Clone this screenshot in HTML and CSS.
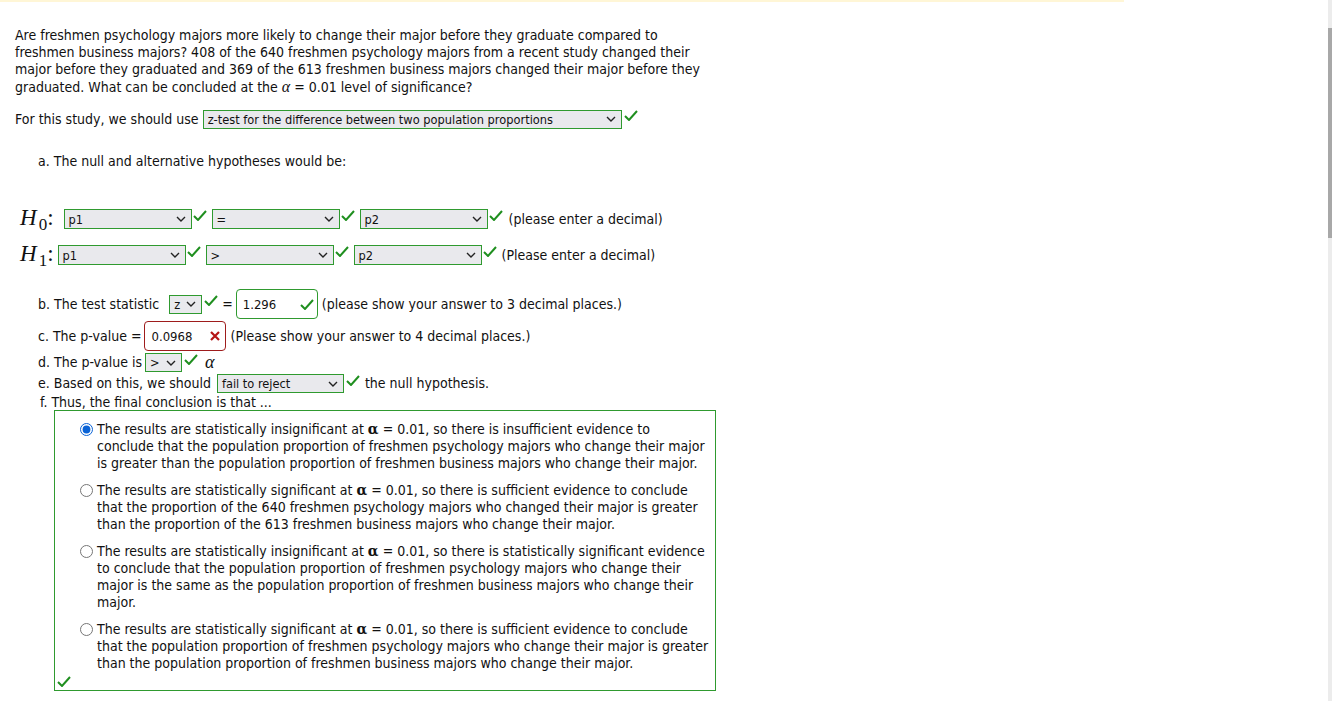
FILE: index.html
```html
<!DOCTYPE html>
<html>
<head>
<meta charset="utf-8">
<link rel="stylesheet" href="styles.css">
</head>
<body>
<div class="topbar"></div>
<div class="page">
  <p class="question">Are freshmen psychology majors more likely to change their major before they graduate compared to<br>freshmen business majors? 408 of the 640 freshmen psychology majors from a recent study changed their<br>major before they graduated and 369 of the 613 freshmen business majors changed their major before they<br>graduated. What can be concluded at the <span class="malpha">α</span> = 0.01 level of significance?</p>

  <div class="row study">
    <span>For this study, we should use</span>
    <span class="sel w-study"><span class="val">z-test for the difference between two population proportions</span><svg class="chev" viewBox="0 0 10 6" width="10" height="6"><path d="M1 1 L5 5 L9 1" fill="none" stroke="#222" stroke-width="1.4"/></svg></span>
    <svg class="check" viewBox="0 0 14 11" width="14" height="11"><path d="M1 6 L5 10 L13 1" fill="none" stroke="#1f8f1f" stroke-width="2"/></svg>
  </div>

  <div class="row parta">a. The null and alternative hypotheses would be:</div>

  <div class="row hyp h0">
    <span class="mathH"><i>H</i><span class="sub">0</span>:</span>
    <span class="sel w-hyp"><span class="val">p1</span><svg class="chev" viewBox="0 0 10 6" width="10" height="6"><path d="M1 1 L5 5 L9 1" fill="none" stroke="#222" stroke-width="1.4"/></svg></span>
    <svg class="check" viewBox="0 0 14 11" width="14" height="11"><path d="M1 6 L5 10 L13 1" fill="none" stroke="#1f8f1f" stroke-width="2"/></svg>
    <span class="sel w-hyp"><span class="val">=</span><svg class="chev" viewBox="0 0 10 6" width="10" height="6"><path d="M1 1 L5 5 L9 1" fill="none" stroke="#222" stroke-width="1.4"/></svg></span>
    <svg class="check" viewBox="0 0 14 11" width="14" height="11"><path d="M1 6 L5 10 L13 1" fill="none" stroke="#1f8f1f" stroke-width="2"/></svg>
    <span class="sel w-hyp"><span class="val">p2</span><svg class="chev" viewBox="0 0 10 6" width="10" height="6"><path d="M1 1 L5 5 L9 1" fill="none" stroke="#222" stroke-width="1.4"/></svg></span>
    <svg class="check" viewBox="0 0 14 11" width="14" height="11"><path d="M1 6 L5 10 L13 1" fill="none" stroke="#1f8f1f" stroke-width="2"/></svg>
    <span class="note">(please enter a decimal)</span>
  </div>

  <div class="row hyp h1">
    <span class="mathH"><i>H</i><span class="sub">1</span>:</span>
    <span class="sel w-hyp"><span class="val">p1</span><svg class="chev" viewBox="0 0 10 6" width="10" height="6"><path d="M1 1 L5 5 L9 1" fill="none" stroke="#222" stroke-width="1.4"/></svg></span>
    <svg class="check" viewBox="0 0 14 11" width="14" height="11"><path d="M1 6 L5 10 L13 1" fill="none" stroke="#1f8f1f" stroke-width="2"/></svg>
    <span class="sel w-hyp"><span class="val">&gt;</span><svg class="chev" viewBox="0 0 10 6" width="10" height="6"><path d="M1 1 L5 5 L9 1" fill="none" stroke="#222" stroke-width="1.4"/></svg></span>
    <svg class="check" viewBox="0 0 14 11" width="14" height="11"><path d="M1 6 L5 10 L13 1" fill="none" stroke="#1f8f1f" stroke-width="2"/></svg>
    <span class="sel w-hyp"><span class="val">p2</span><svg class="chev" viewBox="0 0 10 6" width="10" height="6"><path d="M1 1 L5 5 L9 1" fill="none" stroke="#222" stroke-width="1.4"/></svg></span>
    <svg class="check" viewBox="0 0 14 11" width="14" height="11"><path d="M1 6 L5 10 L13 1" fill="none" stroke="#1f8f1f" stroke-width="2"/></svg>
    <span class="note">(Please enter a decimal)</span>
  </div>

  <div class="row item partb">
    <span>b. The test statistic</span>
    <span class="sel w-z"><span class="val">z</span><svg class="chev" viewBox="0 0 10 6" width="10" height="6"><path d="M1 1 L5 5 L9 1" fill="none" stroke="#222" stroke-width="1.4"/></svg></span>
    <svg class="check" viewBox="0 0 14 11" width="14" height="11"><path d="M1 6 L5 10 L13 1" fill="none" stroke="#1f8f1f" stroke-width="2"/></svg>
    <span class="eq">=</span>
    <span class="field ok"><span class="val">1.296</span><svg class="icon" viewBox="0 0 14 11" width="14" height="11"><path d="M1 6 L5 10 L13 1" fill="none" stroke="#1f8f1f" stroke-width="2"/></svg></span>
    <span class="after">(please show your answer to 3 decimal places.)</span>
  </div>

  <div class="row item partc">
    <span>c. The p-value =</span>
    <span class="field bad"><span class="val">0.0968</span><svg class="icon" viewBox="0 0 10 10" width="10" height="10"><path d="M1 1 L9 9 M9 1 L1 9" fill="none" stroke="#b51515" stroke-width="2.2"/></svg></span>
    <span class="after">(Please show your answer to 4 decimal places.)</span>
  </div>

  <div class="row item partd">
    <span>d. The p-value is</span>
    <span class="sel w-cmp"><span class="val">&gt;</span><svg class="chev" viewBox="0 0 10 6" width="10" height="6"><path d="M1 1 L5 5 L9 1" fill="none" stroke="#222" stroke-width="1.4"/></svg></span>
    <svg class="check" viewBox="0 0 14 11" width="14" height="11"><path d="M1 6 L5 10 L13 1" fill="none" stroke="#1f8f1f" stroke-width="2"/></svg>
    <span class="malpha big">α</span>
  </div>

  <div class="row item parte">
    <span>e. Based on this, we should</span>
    <span class="sel w-rej"><span class="val">fail to reject</span><svg class="chev" viewBox="0 0 10 6" width="10" height="6"><path d="M1 1 L5 5 L9 1" fill="none" stroke="#222" stroke-width="1.4"/></svg></span>
    <svg class="check" viewBox="0 0 14 11" width="14" height="11"><path d="M1 6 L5 10 L13 1" fill="none" stroke="#1f8f1f" stroke-width="2"/></svg>
    <span class="after2">the null hypothesis.</span>
  </div>

  <div class="row partf">f. Thus, the final conclusion is that ...</div>

  <div class="choices">
    <label class="choice">
      <input type="radio" name="concl" checked>
      <span>The results are statistically insignificant at <b class="balpha">α</b> = 0.01, so there is insufficient evidence to<br>conclude that the population proportion of freshmen psychology majors who change their major<br>is greater than the population proportion of freshmen business majors who change their major.</span>
    </label>
    <label class="choice">
      <input type="radio" name="concl">
      <span>The results are statistically significant at <b class="balpha">α</b> = 0.01, so there is sufficient evidence to conclude<br>that the proportion of the 640 freshmen psychology majors who changed their major is greater<br>than the proportion of the 613 freshmen business majors who change their major.</span>
    </label>
    <label class="choice">
      <input type="radio" name="concl">
      <span>The results are statistically insignificant at <b class="balpha">α</b> = 0.01, so there is statistically significant evidence<br>to conclude that the population proportion of freshmen psychology majors who change their<br>major is the same as the population proportion of freshmen business majors who change their<br>major.</span>
    </label>
    <label class="choice">
      <input type="radio" name="concl">
      <span>The results are statistically significant at <b class="balpha">α</b> = 0.01, so there is sufficient evidence to conclude<br>that the population proportion of freshmen psychology majors who change their major is greater<br>than the population proportion of freshmen business majors who change their major.</span>
    </label>
    <svg class="boxcheck" viewBox="0 0 14 11" width="14" height="11"><path d="M1 6 L5 10 L13 1" fill="none" stroke="#1f8f1f" stroke-width="2"/></svg>
  </div>
</div>
<div class="scrollbar"><div class="thumb"></div></div>
</body>
</html>
```
FILE: styles.css
```css
html, body {
  margin: 0;
  padding: 0;
  background: #fff;
}
body {
  font-family: "DejaVu Sans Condensed", "DejaVu Sans", sans-serif;
  font-size: 14px;
  line-height: 17px;
  color: #111;
}
.topbar {
  height: 2px;
  width: 1124px;
  background: #fff6d6;
}
.page {
  padding-left: 15px;
}
.question {
  margin: 25px 0 0 0;
  white-space: nowrap;
}
.malpha {
  font-family: "Liberation Serif", "DejaVu Serif", serif;
  font-style: italic;
  font-size: 16px;
}
.malpha.big {
  font-size: 18px;
  margin-left: 7px;
}
.row {
  display: flex;
  align-items: center;
  white-space: nowrap;
}
.study {
  margin-top: 13px;
  height: 20px;
}
.study .sel {
  margin-left: 4px;
}
.parta {
  margin-top: 24px;
  padding-left: 23px;
}
.sel {
  display: inline-flex;
  align-items: center;
  justify-content: space-between;
  box-sizing: border-box;
  height: 19px;
  background: #e9e9ed;
  border: 1px solid #2f9a2f;
  padding: 0 5px 0 4px;
  font-family: "DejaVu Sans Condensed", "DejaVu Sans", sans-serif;
  font-size: 12.7px;
  color: #111;
}
.sel .chev {
  flex: none;
  margin-left: 6px;
}
.check {
  flex: none;
  margin: -7px 0 0 2px;
}
.w-study { width: 419px; }
.w-hyp { width: 128px; height: 20px; }
.w-z { width: 33px; }
.w-cmp { width: 37px; }
.w-rej { width: 127px; }

.hyp {
  height: 24px;
  padding-left: 5px;
}
.h0 { margin-top: 37px; }
.h1 { margin-top: 12px; }
.mathH {
  font-family: "Liberation Serif", "DejaVu Serif", serif;
  font-size: 23px;
  line-height: 24px;
  margin-right: 10px;
}
.mathH i {
  font-style: italic;
}
.mathH .sub {
  position: relative;
  top: 5px;
  font-size: 17px;
  margin-left: 2px;
}
.h1 .mathH { margin-right: 4px; }
.hyp .check { margin: -7px 5px 0 1px; }
.hyp .note { margin-left: 0; }
.h0 .note { margin-left: 1px; }

.item {
  padding-left: 23px;
}
.partb { margin-top: 22px; height: 30px; }
.partb .sel { margin-left: 10px; }
.eq { margin: 0 3px 0 4px; }
.field {
  display: inline-flex;
  align-items: center;
  justify-content: space-between;
  box-sizing: border-box;
  width: 82px;
  height: 30px;
  border-radius: 4px;
  padding: 0 3px 0 6px;
  background: #fff;
  font-size: 13px;
}
.field.ok { border: 1px solid #2f9a2f; }
.field.bad { border: 1px solid #9e1c1c; }
.field.bad .icon { margin-right: 2px; }
.after { margin-left: 4px; }
.partc { margin-top: 2px; height: 30px; }
.partc .field { margin-left: 3px; }
.partd { margin-top: 2px; height: 19px; }
.partd .sel { margin-left: 3px; }
.parte { margin-top: 2px; height: 19px; }
.parte .sel { margin-left: 6px; }
.after2 { margin-left: 5px; }
.partf {
  margin-top: 2px;
  height: 15px;
  padding-left: 25px;
}

.choices {
  position: relative;
  box-sizing: border-box;
  width: 662px;
  height: 281px;
  margin-left: 39px;
  border: 1px solid #2f9a2f;
  padding: 10px 0 0 25px;
}
.choice {
  display: flex;
  align-items: flex-start;
  margin-bottom: 10px;
  white-space: nowrap;
}
.choice input {
  flex: none;
  width: 13px;
  height: 13px;
  margin: 2px 4px 0 0;
  accent-color: #0a63d6;
}
.balpha {
  font-family: "DejaVu Serif", serif;
  font-weight: bold;
  font-size: 14px;
}
.boxcheck {
  position: absolute;
  left: 2px;
  bottom: 3px;
}
.scrollbar {
  position: fixed;
  top: 0;
  right: 0;
  width: 4px;
  height: 100%;
  background: #ececec;
}
.scrollbar .thumb {
  margin-top: 28px;
  height: 210px;
  background: #a8a8a8;
}
```
